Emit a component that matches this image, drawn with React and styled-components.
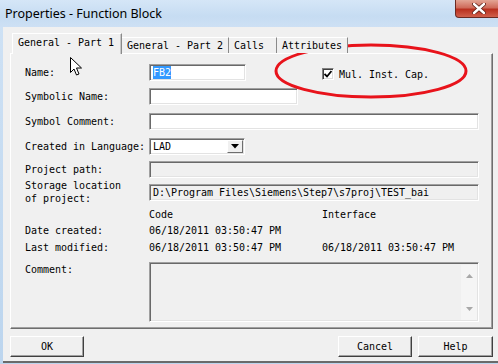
import React from 'react';
import styled, { createGlobalStyle } from 'styled-components';

const Global = createGlobalStyle`
  html, body { margin: 0; padding: 0; background: #fff; }
`;

const Window = styled.div`
  position: relative;
  width: 498px;
  height: 364px;
  overflow: hidden;
  background: linear-gradient(#cfe2f5, #bcd5ee);
  display: flex;
  flex-direction: column;
`;

const TitleBar = styled.div`
  height: 27px;
  flex: none;
  display: flex;
  align-items: center;
  padding-left: 5px;
  background: linear-gradient(#d5e6f7, #c6dcf2 60%, #cde0f4);
  font-family: "Noto Sans", "Open Sans", sans-serif;
  font-size: 12.5px;
  color: #000;
`;

const CloseButton = styled.div`
  position: absolute;
  top: 0;
  left: 455px;
  width: 48px;
  height: 18px;
  border-radius: 0 0 4px 4px;
  border: 1px solid #6b2a22;
  border-top: none;
  box-sizing: border-box;
  background: linear-gradient(#e3a595, #cf6b5a 45%, #b9301f 55%, #d0604c);
  display: flex;
  align-items: center;
  justify-content: center;
`;

const Body = styled.div`
  flex: 1;
  margin-left: 3px;
  background: #f0f0f0;
  padding: 6px 5px 0 7px;
  display: flex;
  flex-direction: column;
  border-bottom: 2px solid #6a6a6a;
  margin-bottom: 1px;
  font-family: "DejaVu Sans Mono", "Liberation Mono", monospace;
  font-size: 10px;
  letter-spacing: -0.02px;
  color: #000;
`;

const TabStrip = styled.div`
  display: flex;
  align-items: flex-end;
  height: 20px;
  padding-left: 2px;
  position: relative;
  z-index: 1;
`;

const Tab = styled.div`
  box-sizing: border-box;
  width: ${p => p.$w}px;
  height: ${p => (p.$active ? 21 : 16)}px;
  margin-bottom: ${p => (p.$active ? -1 : 0)}px;
  padding-left: 5px;
  display: flex;
  align-items: ${p => (p.$active ? 'flex-start' : 'center')};
  padding-top: ${p => (p.$active ? 3 : 0)}px;
  background: #f0f0f0;
  border-top: 1px solid #fff;
  border-left: ${p => (p.$first ? '1px solid #fff' : 'none')};
  border-right: 1px solid #8a8a8a;
  box-shadow: ${p => (p.$active ? 'inset -1px 0 0 #c8c8c8' : 'none')};
  white-space: pre;
`;

const Panel = styled.div`
  position: relative;
  width: 483px;
  height: 276px;
  box-sizing: border-box;
  border-top: 1px solid #fff;
  border-left: 1px solid #fff;
  border-right: 1px solid #6e6e6e;
  border-bottom: 1px solid #6e6e6e;
  box-shadow: inset -1px -1px 0 #a0a0a0;
  padding: 0 13px 0 14px;
  display: flex;
  flex-direction: column;
`;

const Row = styled.div`
  display: grid;
  grid-template-columns: 124px 1fr;
  align-items: ${p => (p.$top ? 'start' : 'center')};
  height: ${p => p.$h}px;
  margin-top: ${p => p.$mt}px;
`;

const Label = styled.div`
  white-space: pre;
  line-height: 13px;
  padding-top: ${p => p.$pt || 0}px;
`;

const FieldLine = styled.div`
  display: flex;
  align-items: center;
`;

const Field = styled.div`
  box-sizing: border-box;
  width: ${p => (p.$w ? `${p.$w}px` : '100%')};
  height: ${p => p.$h || 17}px;
  background: ${p => (p.$disabled ? '#f0f0f0' : '#fff')};
  border-top: 1px solid #a0a0a0;
  border-left: 1px solid #a0a0a0;
  border-right: 1px solid #fff;
  border-bottom: 1px solid #fff;
  box-shadow: inset 1px 1px 0 #696969, inset -1px -1px 0 #e3e3e3;
  padding-left: 3px;
  display: flex;
  align-items: center;
  white-space: pre;
  position: relative;
`;

const Selected = styled.span`
  background: #3399ff;
  color: #fff;
  line-height: 13px;
`;

const DropButton = styled.div`
  position: absolute;
  right: 1px;
  top: 1px;
  bottom: 1px;
  width: 16px;
  background: #f0f0f0;
  border-top: 1px solid #fff;
  border-left: 1px solid #fff;
  border-right: 1px solid #6e6e6e;
  border-bottom: 1px solid #6e6e6e;
  box-sizing: border-box;
  display: flex;
  align-items: center;
  justify-content: center;
`;

const Check = styled.div`
  margin-left: 76px;
  width: 12px;
  height: 12px;
  box-sizing: border-box;
  background: #fff;
  border-top: 1px solid #808080;
  border-left: 1px solid #808080;
  border-right: 1px solid #fff;
  border-bottom: 1px solid #fff;
  box-shadow: inset 1px 1px 0 #404040, inset -1px -1px 0 #dcdcdc;
  display: flex;
  align-items: center;
  justify-content: center;
  margin-top: 3px;
`;

const CheckLabel = styled.span`
  margin-left: 5px;
  margin-top: 3px;
  white-space: pre;
`;

const Cols = styled.div`
  display: grid;
  grid-template-columns: 173px 1fr;
  white-space: pre;
`;

const ScrollBar = styled.div`
  position: absolute;
  right: 1px;
  top: 2px;
  bottom: 1px;
  width: 16px;
  background: #f5f5f5;
  display: flex;
  flex-direction: column;
  justify-content: space-between;
  align-items: center;
  padding: 9px 0;
  box-sizing: border-box;
`;

const ButtonRow = styled.div`
  display: flex;
  margin-top: 7px;
  width: 483px;
`;

const Button = styled.div`
  box-sizing: border-box;
  width: ${p => p.$w}px;
  height: 21px;
  margin-left: ${p => p.$ml || 0}px;
  background: #f0f0f0;
  border-top: 1px solid #fff;
  border-left: 1px solid #fff;
  border-right: 1px solid #404040;
  border-bottom: 1px solid #404040;
  box-shadow: inset -1px -1px 0 #a0a0a0;
  display: flex;
  align-items: center;
  justify-content: center;
`;

const Overlay = styled.svg`
  position: absolute;
  left: ${p => p.$x}px;
  top: ${p => p.$y}px;
  pointer-events: none;
  overflow: visible;
`;

const tabs = [
  { t: 'General - Part 1', w: 110, active: true },
  { t: 'General - Part 2', w: 107 },
  { t: 'Calls', w: 48 },
  { t: 'Attributes', w: 71 },
];

const Arrow = ({ up }) => (
  <svg width="7" height="4" viewBox="0 0 7 4">
    <path d={up ? 'M0 4 L3.5 0 L7 4 Z' : 'M0 0 L3.5 4 L7 0 Z'} fill="#a8a8a8" />
  </svg>
);

export default function App() {
  return (
    <Window>
      <Global />
      <TitleBar>Properties - Function Block</TitleBar>
      <CloseButton>
        <svg width="14" height="11" viewBox="0 0 14 11">
          <path d="M2 1 L12 10 M12 1 L2 10" stroke="#5a1d14" strokeWidth="4" strokeLinecap="round" />
          <path d="M2 1 L12 10 M12 1 L2 10" stroke="#fff" strokeWidth="2.4" strokeLinecap="round" />
        </svg>
      </CloseButton>
      <Body>
        <TabStrip>
          {tabs.map((tb, i) => (
            <Tab key={tb.t} $w={tb.w} $active={tb.active} $first={i === 0}>{tb.t}</Tab>
          ))}
        </TabStrip>
        <Panel>
          <Row $h={17} $mt={10}>
            <Label>Name:</Label>
            <FieldLine>
              <Field $w={97}><Selected>FB2</Selected></Field>
              <Check>
                <svg width="8" height="8" viewBox="0 0 8 8">
                  <path d="M0.5 4 L3 6.5 L7.5 1" stroke="#000" strokeWidth="1.8" fill="none" />
                </svg>
              </Check>
              <CheckLabel>Mul. Inst. Cap.</CheckLabel>
            </FieldLine>
          </Row>
          <Row $h={17} $mt={7}>
            <Label>Symbolic Name:</Label>
            <Field $w={149} />
          </Row>
          <Row $h={17} $mt={8}>
            <Label>Symbol Comment:</Label>
            <Field />
          </Row>
          <Row $h={17} $mt={8}>
            <Label>Created in Language:</Label>
            <Field $w={96}>
              LAD
              <DropButton>
                <svg width="8" height="5" viewBox="0 0 8 5"><path d="M0 0 L8 0 L4 4.5 Z" fill="#000" /></svg>
              </DropButton>
            </Field>
          </Row>
          <Row $h={17} $mt={6}>
            <Label>Project path:</Label>
            <Field $disabled />
          </Row>
          <Row $h={26} $mt={1}>
            <Label>{'Storage location\nof project:'}</Label>
            <Field $disabled>D:\Program Files\Siemens\Step7\s7proj\TEST_bai</Field>
          </Row>
          <Row $h={14} $mt={2}>
            <Label />
            <Cols><span>Code</span><span>Interface</span></Cols>
          </Row>
          <Row $h={14} $mt={2}>
            <Label>Date created:</Label>
            <Cols><span>06/18/2011 03:50:47 PM</span><span /></Cols>
          </Row>
          <Row $h={14} $mt={3}>
            <Label>Last modified:</Label>
            <Cols><span>06/18/2011 03:50:47 PM</span><span>06/18/2011 03:50:47 PM</span></Cols>
          </Row>
          <Row $h={60} $mt={8} $top>
            <Label $pt={1}>Comment:</Label>
            <Field $h={60} $disabled>
              <ScrollBar>
                <Arrow up />
                <Arrow />
              </ScrollBar>
            </Field>
          </Row>
        </Panel>
        <ButtonRow>
          <Button $w={74}>OK</Button>
          <Button $w={74} $ml={254}>Cancel</Button>
          <Button $w={75} $ml={6}>Help</Button>
        </ButtonRow>
      </Body>
      <Overlay $x={273} $y={42} width="196" height="58">
        <ellipse cx="98" cy="29" rx="95" ry="26" fill="none" stroke="#e8131b" strokeWidth="3" />
      </Overlay>
      <Overlay $x={70} $y={57} width="13" height="20">
        <path d="M0.5 0.5 L0.5 15.5 L4 12 L6.5 18 L9 17 L6.5 11 L11.5 11 Z" fill="#fff" stroke="#000" strokeWidth="1" />
      </Overlay>
    </Window>
  );
}
